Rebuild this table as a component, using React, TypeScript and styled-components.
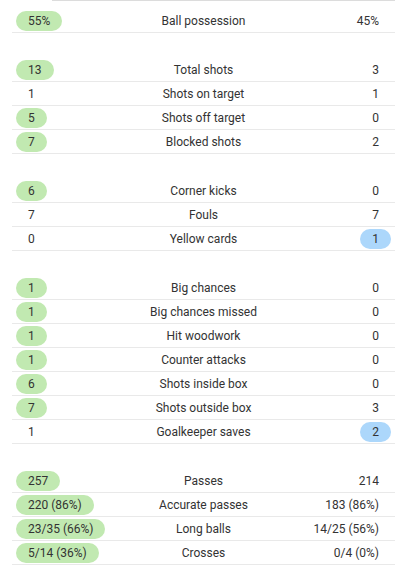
import React from 'react';
import styled, { createGlobalStyle } from 'styled-components';

const GlobalStyle = createGlobalStyle`
  body {
    margin: 0;
    background: #fff;
    font-family: Roboto, "Liberation Sans", sans-serif;
  }
`;

type Side = 'home' | 'away' | 'none';
type Stat = { label: string; home: string; away: string; best: Side };

const groups: Stat[][] = [
  [{ label: 'Ball possession', home: '55%', away: '45%', best: 'home' }],
  [
    { label: 'Total shots', home: '13', away: '3', best: 'home' },
    { label: 'Shots on target', home: '1', away: '1', best: 'none' },
    { label: 'Shots off target', home: '5', away: '0', best: 'home' },
    { label: 'Blocked shots', home: '7', away: '2', best: 'home' },
  ],
  [
    { label: 'Corner kicks', home: '6', away: '0', best: 'home' },
    { label: 'Fouls', home: '7', away: '7', best: 'none' },
    { label: 'Yellow cards', home: '0', away: '1', best: 'away' },
  ],
  [
    { label: 'Big chances', home: '1', away: '0', best: 'home' },
    { label: 'Big chances missed', home: '1', away: '0', best: 'home' },
    { label: 'Hit woodwork', home: '1', away: '0', best: 'home' },
    { label: 'Counter attacks', home: '1', away: '0', best: 'home' },
    { label: 'Shots inside box', home: '6', away: '0', best: 'home' },
    { label: 'Shots outside box', home: '7', away: '3', best: 'home' },
    { label: 'Goalkeeper saves', home: '1', away: '2', best: 'away' },
  ],
  [
    { label: 'Passes', home: '257', away: '214', best: 'home' },
    { label: 'Accurate passes', home: '220 (86%)', away: '183 (86%)', best: 'home' },
    { label: 'Long balls', home: '23/35 (66%)', away: '14/25 (56%)', best: 'home' },
    { label: 'Crosses', home: '5/14 (36%)', away: '0/4 (0%)', best: 'home' },
  ],
];

const Page = styled.div`
  width: 406px;
`;

const TabLine = styled.div`
  height: 1px;
  margin: 0 11px 0 52px;
  background: #dcdcdc;
`;

const Stats = styled.div`
  padding: 8px 11px 0 12px;
`;

const Group = styled.section`
  & + & {
    margin-top: 25px;
  }
`;

const Row = styled.div`
  display: grid;
  grid-template-columns: 1fr auto 1fr;
  align-items: center;
  height: 23px;
  padding: 0 4px;
  border-bottom: 1px solid #e9e9e9;
  font-size: 12px;
  color: #333;
`;

const Label = styled.div`
  text-align: center;
  white-space: nowrap;
`;

const Cell = styled.div<{ $align: 'left' | 'right' }>`
  display: flex;
  justify-content: ${(p) => (p.$align === 'left' ? 'flex-start' : 'flex-end')};
`;

const Value = styled.span<{ $tone: 'green' | 'blue' | 'plain' }>`
  display: inline-block;
  height: 20px;
  line-height: 20px;
  padding: 0 12px;
  border-radius: 10px;
  white-space: nowrap;
  background: ${(p) =>
    p.$tone === 'green' ? '#c1e9b1' : p.$tone === 'blue' ? '#acd7fb' : 'transparent'};
`;

export default function App() {
  return (
    <Page>
      <GlobalStyle />
      <TabLine />
      <Stats>
        {groups.map((g, i) => (
          <Group key={i}>
            {g.map((s) => (
              <Row key={s.label}>
                <Cell $align="left">
                  <Value $tone={s.best === 'home' ? 'green' : 'plain'}>{s.home}</Value>
                </Cell>
                <Label>{s.label}</Label>
                <Cell $align="right">
                  <Value $tone={s.best === 'away' ? 'blue' : 'plain'}>{s.away}</Value>
                </Cell>
              </Row>
            ))}
          </Group>
        ))}
      </Stats>
    </Page>
  );
}
